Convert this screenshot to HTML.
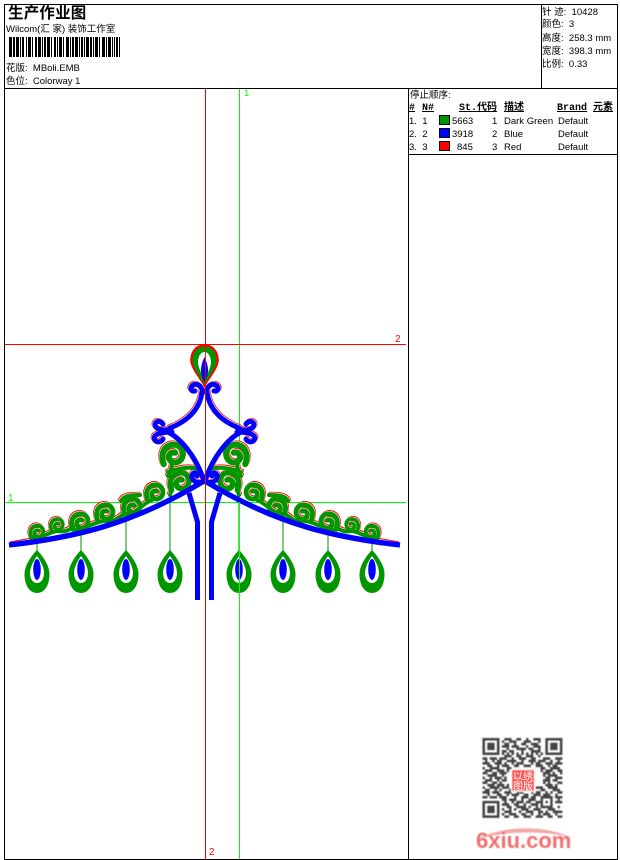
<!DOCTYPE html>
<html><head><meta charset="utf-8"><style>
html,body{margin:0;padding:0;background:#fff}
#p{position:relative;width:620px;height:860px;overflow:hidden;background:#fff;font-family:"Liberation Sans","WenQuanYi Zen Hei","Noto Sans CJK SC",sans-serif;font-size:9.5px;color:#000}
#p div{position:absolute;white-space:pre;line-height:12px}
.h{font-family:"Liberation Mono","WenQuanYi Zen Hei","Noto Sans CJK SC",monospace;font-weight:bold;text-decoration:underline;font-size:10px}
svg{position:absolute;left:0;top:0}
</style></head><body><div id="p">
<svg width="620" height="860" viewBox="0 0 620 860">
<defs>
<path id="s" d="M-8,8 C-11,1 -9,-8 0,-9 C7,-9 10,-3 8,2 C6,7 0,8 -3,4 C-5,0 -2,-3 2,-2" fill="none" stroke="currentColor" stroke-width="5.2" stroke-linecap="round"/>
<g id="gs" fill="none" stroke="currentColor" stroke-width="4" stroke-linecap="round">
<use href="#s" transform="translate(37,532) scale(.72)"/>
<use href="#s" transform="translate(57,525) scale(.68)"/>
<use href="#s" transform="translate(80,522) scale(.92)"/>
<use href="#s" transform="translate(105,513) scale(.92)"/>
<use href="#s" transform="translate(132,507) scale(.92)"/>
<use href="#s" transform="translate(155,493) scale(.92)"/>
<use href="#s" transform="translate(173,455) scale(1.15)"/>
<use href="#s" transform="translate(180,482) scale(1.05)"/>
<path d="M33,537 C45,538 50,531 58,531 C64,532 68,531 73,527"/>
<path d="M76,530 C90,527 98,520 108,521 C118,522 122,512 127,514"/>
<path d="M128,515 C140,510 145,502 152,500"/>
<path d="M121,501 C124,495 132,495 140,495"/>
<path d="M170,495 C172,490 172,488 172,484"/>
<path d="M168,472 C182,467 192,467 199,469"/>
<path d="M172,463 C172,468 170,472 168,476"/>
</g>
<g id="bs" fill="none" stroke="currentColor" stroke-width="5" stroke-linecap="round">
<path d="M203,392 C201,385 197,383 193,385 C189,388 191,392 195,391"/>
<path d="M202,392 C200,408 190,420 170,428"/>
<path d="M171,429 C164,431 156,430 155,425 C155,421 160,420 163,424"/>
<path d="M172,432 C165,432 155,433 154,438 C155,443 161,443 163,439"/>
<path d="M168,432 C180,438 195,455 203,478"/>
<path d="M203,482 C196,484 191,480 192,475 C194,471 198,473 197,476"/>
</g>
<g id="half">
<use href="#gs" color="#f00" transform="translate(-1,-1.3)"/>
<use href="#bs" color="#f00" transform="translate(-1,-1)"/>
<use href="#gs" color="#fff" transform="translate(-.4,-.5)"/>
<use href="#bs" color="#fff" transform="translate(-.4,-.4)"/>
<path d="M10,542 L32,538" stroke="#f00" stroke-width="1" fill="none"/>
<use href="#gs" color="#009600"/>
<use href="#bs" color="#00f"/>
<path d="M37,540V552M81,533V552M126,520V552M170,502V552" stroke="#009600" stroke-width="1" fill="none"/>
<path d="M9,545 C70,538 130,526 204,481" fill="none" stroke="#00f" stroke-width="5.4"/>
<path d="M197.5,600 V522 L189,493" fill="none" stroke="#00f" stroke-width="5"/>
</g>
<g id="d">
<path d="M0,0 C-3,3 -12.5,14 -12.5,24 C-12.5,36 -7,43 0,43 C7,43 12.5,36 12.5,24 C12.5,14 3,3 0,0Z" fill="#009600"/>
<path d="M0,6 C-2,9 -7,16 -7,23 C-7,29 -4,33 0,33 C4,33 7,29 7,23 C7,16 2,9 0,6Z" fill="#fff"/>
<ellipse cx="0" cy="19.5" rx="3.8" ry="10.5" fill="#00f"/>
</g>
<filter id="b" x="-5%" y="-5%" width="110%" height="110%"><feGaussianBlur stdDeviation=".5"/></filter>
</defs>

<!-- guides -->
<g shape-rendering="crispEdges">
<rect x="205" y="89" width="1" height="770" fill="#f00"/>
<rect x="239" y="89" width="1" height="770" fill="#0f0"/>
<rect x="4" y="344" width="402" height="1" fill="#f00"/>
<rect x="4" y="502" width="402" height="1" fill="#0f0"/>
</g>

<!-- design -->
<use href="#half"/>
<use href="#half" transform="translate(409,0) scale(-1,1)"/>
<g>
<path d="M204.5,345.5 C195,345.5 191.5,354 191.5,360 C191.5,368 201,378 204.5,385 C208,378 217.5,368 217.5,360 C217.5,354 214,345.5 204.5,345.5Z" fill="#fff" stroke="#f00" stroke-width="2.6"/>
<path d="M204.5,346.5 C196,346.5 192.5,354 192.5,360 C192.5,368 201,378 204.5,385 C208,378 216.5,368 216.5,360 C216.5,354 213,346.5 204.5,346.5Z" fill="#009600"/>
<path d="M204.5,352 C200,352 198,358 198,362 C198,368 202.5,375 204.5,380 C206.5,375 211,368 211,362 C211,358 209,352 204.5,352Z" fill="#fff"/>
<path d="M204.5,357 C202,362 201,367 201,370 C201,375 203,379 204.5,382 C206,379 208,375 208,370 C208,367 207,362 204.5,357Z" fill="#00f"/>
</g>
<use href="#d" x="37" y="550"/><use href="#d" x="81" y="550"/><use href="#d" x="126" y="550"/><use href="#d" x="170" y="550"/>
<use href="#d" x="239" y="550"/><use href="#d" x="283" y="550"/><use href="#d" x="328" y="550"/><use href="#d" x="372" y="550"/>
<rect x="239" y="502" width="1" height="100" fill="#0f0" shape-rendering="crispEdges"/>
<rect x="205" y="345" width="1" height="250" fill="#f00" shape-rendering="crispEdges" opacity=".9"/>

<!-- frame -->
<g shape-rendering="crispEdges" fill="#000">
<rect x="4" y="4" width="614" height="1"/><rect x="4" y="859" width="614" height="1"/>
<rect x="4" y="4" width="1" height="856"/><rect x="617" y="4" width="1" height="856"/>
<rect x="4" y="88" width="614" height="1"/><rect x="541" y="4" width="1" height="85"/>
<rect x="408" y="88" width="1" height="772"/><rect x="408" y="154" width="210" height="1"/>
<!-- barcode -->
<path d="M9 37h3v20h-3zM13 37h2v20h-2zM16 37h3v20h-3zM20 37h1v20h-1zM22 37h2v20h-2zM26 37h1v20h-1zM28 37h3v20h-3zM32 37h1v20h-1zM35 37h2v20h-2zM38 37h3v20h-3zM42 37h1v20h-1zM44 37h2v20h-2zM47 37h3v20h-3zM51 37h1v20h-1zM54 37h2v20h-2zM57 37h1v20h-1zM59 37h3v20h-3zM63 37h1v20h-1zM66 37h3v20h-3zM70 37h1v20h-1zM72 37h2v20h-2zM75 37h3v20h-3zM79 37h1v20h-1zM81 37h2v20h-2zM84 37h1v20h-1zM86 37h3v20h-3zM90 37h2v20h-2zM93 37h1v20h-1zM95 37h3v20h-3zM99 37h1v20h-1zM102 37h3v20h-3zM106 37h1v20h-1zM108 37h3v20h-3zM112 37h1v20h-1zM114 37h1v20h-1zM116 37h2v20h-2zM119 37h1v20h-1z"/>
<rect x="439" y="115" width="11" height="10"/><rect x="439" y="128" width="11" height="10"/><rect x="439" y="141" width="11" height="10"/>
<rect x="440" y="116" width="9" height="8" fill="#009600"/><rect x="440" y="129" width="9" height="8" fill="#00f"/><rect x="440" y="142" width="9" height="8" fill="#f00"/>
</g>

<!-- QR -->
<g filter="url(#b)">
<g transform="translate(482.5,738) scale(2.42)" fill="none" stroke="#444" stroke-width="1.05">
<path d="M.5 .5h6v6h-6zM26.5 .5h6v6h-6zM.5 26.5h6v6h-6z"/>
<path d="M2 3.5h3M2 2.5h3M2 4.5h3M28 2.5h3M28 3.5h3M28 4.5h3M2 28.5h3M2 29.5h3M2 30.5h3"/>
<path d="M9 .5h3M14 .5h2M18 .5h1M21 .5h3
M8 1.5h1M11 1.5h3M17 1.5h3M23 1.5h1
M9 2.5h2M13 2.5h1M16 2.5h2M20 2.5h3
M8 3.5h3M12 3.5h3M18 3.5h1M21 3.5h3
M10 4.5h1M14 4.5h4M19 4.5h2M23 4.5h1
M8 5.5h2M11 5.5h2M16 5.5h1M20 5.5h4
M8 6.5h1M10 6.5h1M12 6.5h1M14 6.5h1M16 6.5h1M18 6.5h1M20 6.5h1M22 6.5h1M24 6.5h1
M9 7.5h3M14 7.5h2M18 7.5h3M23 7.5h1
M0 8.5h2M3 8.5h3M7 8.5h3M12 8.5h1M15 8.5h3M20 8.5h2M25 8.5h3M30 8.5h3
M1 9.5h1M4 9.5h1M6 9.5h2M10 9.5h4M16 9.5h1M19 9.5h3M23 9.5h3M28 9.5h1M31 9.5h1
M0 10.5h3M5 10.5h3M9 10.5h1M12 10.5h1M14 10.5h3M20 10.5h1M22 10.5h2M26 10.5h3M30 10.5h3
M2 11.5h2M6 11.5h1M8 11.5h3M13 11.5h2M17 11.5h3M22 11.5h3M27 11.5h1M29 11.5h2
M0 12.5h1M3 12.5h4M10 12.5h2M24 12.5h2M28 12.5h4
M1 13.5h3M6 13.5h3M10 13.5h1M24 13.5h1M26 13.5h3M31 13.5h2
M0 14.5h2M4 14.5h2M7 14.5h3M25 14.5h3M29 14.5h1M32 14.5h1
M2 15.5h4M8 15.5h1M25 15.5h1M27 15.5h4
M0 16.5h1M3 16.5h1M5 16.5h3M9 16.5h1M26 16.5h2M30 16.5h3
M1 17.5h3M6 17.5h1M8 17.5h2M25 17.5h3M29 17.5h2
M0 18.5h2M4 18.5h2M7 18.5h1M25 18.5h1M27 18.5h1M31 18.5h2
M2 19.5h3M6 19.5h3M10 19.5h1M26 19.5h3M30 19.5h1
M0 20.5h1M3 20.5h4M8 20.5h3M13 20.5h3M18 20.5h2M22 20.5h3M27 20.5h4
M1 21.5h2M5 21.5h1M7 21.5h1M11 21.5h2M15 21.5h1M17 21.5h4M24 21.5h2M29 21.5h3
M0 22.5h3M4 22.5h3M9 22.5h3M14 22.5h3M20 22.5h1M22 22.5h2M26 22.5h1M28 22.5h1M31 22.5h2
M2 23.5h1M6 23.5h2M10 23.5h1M12 23.5h3M17 23.5h2M21 23.5h3M25 23.5h3M30 23.5h1
M0 24.5h2M3 24.5h3M7 24.5h3M13 24.5h1M16 24.5h3M20 24.5h2M24 24.5h5M30 24.5h3
M8 25.5h2M11 25.5h3M16 25.5h1M19 25.5h3M24 25.5h1M28 25.5h1M31 25.5h1
M9 26.5h1M12 26.5h1M14 26.5h3M18 26.5h2M22 26.5h2M24 26.5h1M26 26.5h1M28 26.5h1M30 26.5h3
M8 27.5h3M13 27.5h2M17 27.5h1M20 27.5h3M24 27.5h1M28 27.5h1
M10 28.5h2M14 28.5h4M19 28.5h1M22 28.5h1M24 28.5h5M31 28.5h1
M8 29.5h1M11 29.5h1M13 29.5h1M16 29.5h3M21 29.5h3M27 29.5h3
M9 30.5h3M15 30.5h1M18 30.5h3M23 30.5h2M26 30.5h1M29 30.5h4
M8 31.5h1M11 31.5h3M16 31.5h2M20 31.5h1M23 31.5h1M25 31.5h3M30 31.5h1
M9 32.5h2M13 32.5h2M17 32.5h3M22 32.5h3M27 32.5h2M31 32.5h2"/>
</g>
<rect x="511" y="769" width="24" height="23" fill="#fff"/>
<rect x="512" y="770" width="22" height="21" fill="#f55"/>
</g>
<g font-family="'WenQuanYi Zen Hei','Noto Sans CJK SC',sans-serif" font-size="10" fill="#fff">
<text x="513" y="780">以</text><text x="523" y="780">绣</text><text x="513" y="790">图</text><text x="523" y="790">版</text>
</g>
<g filter="url(#b)">
<path d="M478,839 C500,826 545,824 572,838 C545,830 505,831 478,839Z" fill="#f4a8a8"/>
<text x="476" y="848" font-family="'Liberation Sans',sans-serif" font-weight="bold" font-size="22" fill="#f07070">6xiu.com</text>
</g>
</svg>

<div style="left:8px;top:4px;font-size:15.5px;line-height:16px;font-weight:bold;letter-spacing:.2px;font-family:'WenQuanYi Zen Hei','Noto Sans CJK SC',sans-serif">生产作业图</div>
<div style="left:6px;top:24px">Wilcom(汇 家) 装饰工作室</div>
<div style="left:6px;top:63px">花版:  MBoli.EMB</div>
<div style="left:6px;top:76px">色位:  Colorway 1</div>

<div style="left:542px;top:7px">针 迹:  10428</div>
<div style="left:542px;top:19px">颜色:  3</div>
<div style="left:542px;top:33px">高度:  258.3 mm</div>
<div style="left:542px;top:46px">宽度:  398.3 mm</div>
<div style="left:542px;top:59px">比例:  0.33</div>

<div style="left:410px;top:90px">停止顺序:</div>
<div class="h" style="left:409px;top:103px">#</div>
<div class="h" style="left:422px;top:103px">N#</div>
<div class="h" style="left:459px;top:103px">St.</div>
<div class="h" style="left:477px;top:103px">代码</div>
<div class="h" style="left:504px;top:103px">描述</div>
<div class="h" style="left:557px;top:103px">Brand</div>
<div class="h" style="left:593px;top:103px">元素</div>

<div style="left:409px;top:116px">1.  1</div><div style="left:452px;top:116px">5663</div><div style="left:492px;top:116px">1</div><div style="left:504px;top:116px">Dark Green</div><div style="left:558px;top:116px">Default</div>
<div style="left:409px;top:129px">2.  2</div><div style="left:452px;top:129px">3918</div><div style="left:492px;top:129px">2</div><div style="left:504px;top:129px">Blue</div><div style="left:558px;top:129px">Default</div>
<div style="left:409px;top:142px">3.  3</div><div style="left:457px;top:142px">845</div><div style="left:492px;top:142px">3</div><div style="left:504px;top:142px">Red</div><div style="left:558px;top:142px">Default</div>

<div style="left:244px;top:88px;color:#0f0">1</div>
<div style="left:395px;top:334px;color:#f00;font-size:10px">2</div>
<div style="left:8px;top:493px;color:#0f0;font-size:10px">1</div>
<div style="left:209px;top:847px;color:#f00;font-size:10px">2</div>
</div></body></html>
